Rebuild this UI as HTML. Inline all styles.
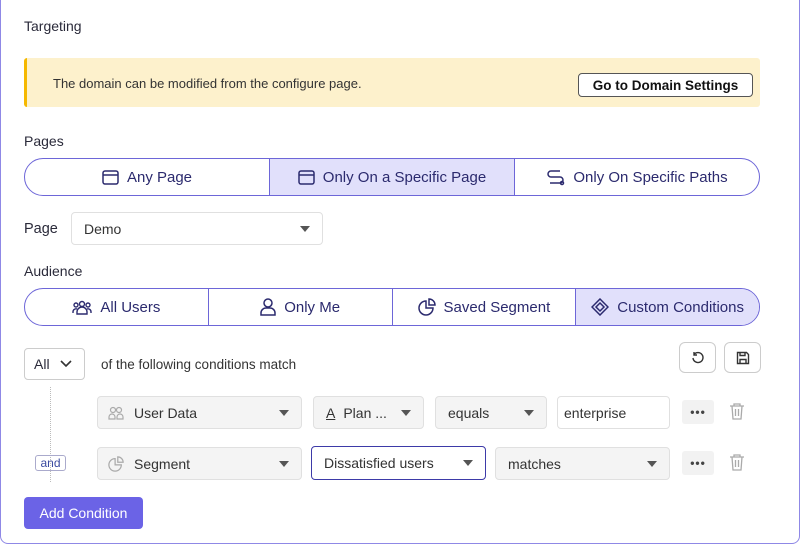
<!DOCTYPE html><html><head><style>
*{box-sizing:border-box;margin:0;padding:0}
body{width:800px;height:545px;background:#fff;font-family:"Liberation Sans",sans-serif;color:#2a2a3a;font-size:14px;position:relative;overflow:hidden}
.frame{position:absolute;left:0;top:-10px;width:800px;height:554px;border:1.5px solid #8f88e6;border-radius:8px}
.a{position:absolute;white-space:nowrap}
.lbl{font-size:14px;color:#2a2a3a}
.seg{position:absolute;left:24px;width:736px;height:38px;border:1.3px solid #6d66d8;border-radius:19px;overflow:hidden;display:flex}
.seg div{flex:1;display:flex;align-items:center;justify-content:center;gap:8px;color:#2b2a6e;font-size:15px;border-left:1.3px solid #6d66d8}
.seg div:first-child{border-left:none}
.seg .on{background:#e1e0fb}
.sel{position:absolute;height:33px;border:1px solid #e0e0e0;border-radius:4px;background:#f4f4f4;display:flex;align-items:center;padding-left:12px;font-size:14px;color:#333}
.car{position:absolute;right:12px;top:13px;width:0;height:0;border-left:5px solid transparent;border-right:5px solid transparent;border-top:6px solid #555}
.ib{position:absolute;width:37px;height:31px;border:1px solid #ccc;border-radius:6px;background:#fff;display:flex;align-items:center;justify-content:center}
.dots{position:absolute;width:32px;height:24px;background:#f2f2f2;border-radius:3px;display:flex;align-items:center;justify-content:center;font-weight:bold;color:#444;font-size:12px;letter-spacing:1px}
</style></head><body>
<div class="frame"></div>
<div class="a lbl" style="left:24px;top:18px">Targeting</div>
<div class="a" style="left:24px;top:58px;width:736px;height:49px;background:#fdf1cc;border-left:3px solid #f5b800;border-radius:3px"></div>
<div class="a" style="left:53px;top:76px;font-size:13px;color:#333">The domain can be modified from the configure page.</div>
<div class="a" style="left:578px;top:73px;width:175px;height:24px;border:1px solid #555;border-radius:4px;background:#fff;font-weight:bold;font-size:13.5px;display:flex;align-items:center;justify-content:center;color:#111">Go to Domain Settings</div>
<div class="a lbl" style="left:24px;top:133px">Pages</div>
<div class="seg" style="top:158px">
<div><svg width="17" height="15" viewBox="0 0 17 15" fill="none" stroke="#2b2a6e" stroke-width="1.5"><rect x="1" y="1" width="15" height="13" rx="2"/><path d="M1 5h15"/></svg>Any Page</div>
<div class="on"><svg width="17" height="15" viewBox="0 0 17 15" fill="none" stroke="#2b2a6e" stroke-width="1.5"><rect x="1" y="1" width="15" height="13" rx="2"/><path d="M1 5h15"/></svg>Only On a Specific Page</div>
<div><svg width="19" height="17" viewBox="0 0 19 17" fill="none" stroke="#2b2a6e" stroke-width="1.5"><path d="M14 2H5a3 3 0 0 0 0 6h9a3 3 0 0 1 0 6H4"/><circle cx="16" cy="14" r="1.5"/></svg>Only On Specific Paths</div>
</div>
<div class="a lbl" style="left:24px;top:221px;font-size:14.5px">Page</div>
<div class="sel" style="left:71px;top:212px;width:252px;background:#fff">Demo<span class="car"></span></div>
<div class="a lbl" style="left:24px;top:263px">Audience</div>
<div class="seg" style="top:288px">
<div><svg width="20" height="16" viewBox="0 0 20 16" fill="none" stroke="#2b2a6e" stroke-width="1.4"><circle cx="10" cy="5" r="2.5"/><circle cx="4" cy="6" r="2"/><circle cx="16" cy="6" r="2"/><path d="M5 15v-2a5 5 0 0 1 10 0v2zM1 14v-1a3 3 0 0 1 4-3M19 14v-1a3 3 0 0 0-4-3"/></svg>All Users</div>
<div><svg width="16" height="18" viewBox="0 0 16 18" fill="none" stroke="#2b2a6e" stroke-width="1.5"><circle cx="8" cy="5" r="4"/><path d="M1 17v-2a5 5 0 0 1 5-5h4a5 5 0 0 1 5 5v2z"/></svg>Only Me</div>
<div><svg width="18" height="18" viewBox="0 0 18 18" fill="none" stroke="#2b2a6e" stroke-width="1.5"><path d="M8 3a7 7 0 1 0 7 7H8z"/><path d="M11 1v6h6a6 6 0 0 0-6-6z"/></svg>Saved Segment</div>
<div class="on"><svg width="18" height="18" viewBox="0 0 18 18" fill="none" stroke="#2b2a6e" stroke-width="1.5"><path d="M9 1l8 8-8 8-8-8z"/><path d="M9 5l4 4-4 4-4-4z"/></svg>Custom Conditions</div>
</div>
<div class="a" style="left:24px;top:348px;width:61px;height:32px;border:1px solid #ccc;border-radius:4px;background:#fff;display:flex;align-items:center;padding-left:9px;font-size:14px">All<svg style="margin-left:10px" width="12" height="8" viewBox="0 0 12 8" fill="none" stroke="#333" stroke-width="1.6"><path d="M1 1l5 5 5-5"/></svg></div>
<div class="a" style="left:101px;top:357px;font-size:13.5px;color:#333">of the following conditions match</div>
<div class="ib" style="left:679px;top:342px"><svg width="14" height="14" viewBox="0 0 14 14" fill="none" stroke="#333" stroke-width="1.4"><path d="M3 3.5A5 5 0 1 1 2 7"/><path d="M3 1v3h3"/></svg></div>
<div class="ib" style="left:724px;top:342px"><svg width="14" height="14" viewBox="0 0 14 14" fill="none" stroke="#333" stroke-width="1.4"><path d="M1.5 1.5h9l2 2v9h-11z"/><path d="M4 1.5v3h5v-3M4 12.5v-4h6v4"/></svg></div>
<div class="a" style="left:50px;top:387px;height:95px;border-left:1.5px dotted #bbb"></div>
<div class="sel" style="left:97px;top:396px;width:205px;padding-left:10px"><svg width="16" height="14" viewBox="0 0 16 14" fill="none" stroke="#aaa" stroke-width="1.2"><circle cx="5" cy="4" r="2.5"/><circle cx="11" cy="4" r="2.5"/><path d="M1 13v-2a3 3 0 0 1 6 0v2zM9 13v-2a3 3 0 0 1 6 0v2z"/></svg><span style="margin-left:10px">User Data</span><span class="car"></span></div>
<div class="sel" style="left:313px;top:396px;width:111px"><span style="text-decoration:underline;margin-right:8px">A</span>Plan ...<span class="car"></span></div>
<div class="sel" style="left:435px;top:396px;width:112px">equals<span class="car"></span></div>
<div class="sel" style="left:557px;top:396px;width:113px;background:#fff;padding-left:6px">enterprise</div>
<div class="dots" style="left:682px;top:400px">•••</div>
<svg class="a" style="left:729px;top:403px" width="16" height="17" viewBox="0 0 16 17" fill="none" stroke="#aaa" stroke-width="1.3"><path d="M1 3h14M5 3V1h6v2M3 3l1 13h8l1-13M6.5 6v7M9.5 6v7"/></svg>
<div class="a" style="left:35px;top:455px;width:31px;height:16px;border:1px solid #aac;border-radius:3px;font-size:12px;color:#3b4ba0;display:flex;align-items:center;justify-content:center">and</div>
<div class="sel" style="left:97px;top:447px;width:205px;padding-left:10px"><svg width="16" height="16" viewBox="0 0 18 18" fill="none" stroke="#aaa" stroke-width="1.4"><path d="M8 3a7 7 0 1 0 7 7H8z"/><path d="M11 1v6h6a6 6 0 0 0-6-6z"/></svg><span style="margin-left:10px">Segment</span><span class="car"></span></div>
<div class="sel" style="left:311px;top:446px;width:175px;height:34px;background:#fff;border:1.5px solid #3d3aa8;padding-left:12px">Dissatisfied users<span class="car"></span></div>
<div class="sel" style="left:495px;top:447px;width:175px">matches<span class="car"></span></div>
<div class="dots" style="left:682px;top:451px">•••</div>
<svg class="a" style="left:729px;top:454px" width="16" height="17" viewBox="0 0 16 17" fill="none" stroke="#aaa" stroke-width="1.3"><path d="M1 3h14M5 3V1h6v2M3 3l1 13h8l1-13M6.5 6v7M9.5 6v7"/></svg>
<div class="a" style="left:24px;top:497px;width:119px;height:32px;background:#6b63e6;border-radius:4px;color:#fff;font-size:14px;display:flex;align-items:center;justify-content:center">Add Condition</div>
</body></html>
